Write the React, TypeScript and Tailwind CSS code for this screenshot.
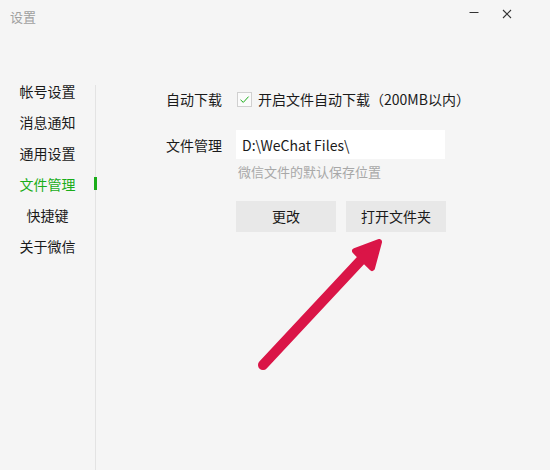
import { FC } from "react";

const menu = ["帐号设置", "消息通知", "通用设置", "文件管理", "快捷键", "关于微信"];

const App: FC = () => {
  return (
    <div className="relative w-[550px] h-[470px] overflow-hidden bg-[#f5f5f5] font-['Noto_Sans_CJK_SC','Microsoft_YaHei',sans-serif] text-[14px] text-[#1a1a1a]">
      {/* 标题栏 */}
      <div className="flex h-[75px] items-start justify-between pl-[10px] pr-[38px] pt-[8px]">
        <span className="text-[13px] leading-[18px] text-[#a0a0a0]">设置</span>
        <div className="flex items-center gap-[23px] pt-[1px]">
          <svg width="10" height="10" viewBox="0 0 10 10">
            <line x1="0.5" y1="3.5" x2="9.5" y2="3.5" stroke="#333" strokeWidth="1" />
          </svg>
          <svg width="10" height="10" viewBox="0 0 10 10">
            <path d="M1 1 L9 9 M9 1 L1 9" stroke="#333" strokeWidth="1.1" />
          </svg>
        </div>
      </div>

      <div className="flex h-[395px]">
        {/* 左侧菜单 */}
        <div className="w-[95px] shrink-0">
          {menu.map((item) => (
            <div
              key={item}
              className={`flex h-[31px] items-center justify-center leading-[20px] ${
                item === "文件管理" ? "text-[#1aad19]" : "text-[#1a1a1a]"
              }`}
            >
              {item}
            </div>
          ))}
        </div>

        {/* 分隔线 */}
        <div className="relative mt-[10px] w-px shrink-0 bg-[#e3e3e3]">
          <span className="absolute left-[-1px] top-[92px] h-[13px] w-[3px] bg-[#1aad19]" />
        </div>

        {/* 内容区 */}
        <div className="flex flex-col pl-[70px] pt-[14px]">
          <div className="flex h-[20px] items-center">
            <span className="w-[56px] leading-[20px]">自动下载</span>
            <span className="ml-[15px] flex h-[15px] w-[15px] items-center justify-center border border-[#d0d0d0] bg-[#fbfbfb]">
              <svg width="11" height="11" viewBox="0 0 11 11">
                <path d="M1.5 5.8 L4.3 8.4 L9.6 2.6" fill="none" stroke="#1aad19" strokeWidth="1" />
              </svg>
            </span>
            <span className="ml-[6px] leading-[20px]">开启文件自动下载（200MB以内）</span>
          </div>

          <div className="mt-[21px] flex items-center">
            <span className="w-[56px] leading-[20px]">文件管理</span>
            <div className="ml-[14px] flex h-[29px] w-[209px] items-center bg-white pl-[6px] leading-[20px]">
              D:\WeChat Files\
            </div>
          </div>

          <div className="ml-[72px] mt-[4px] text-[13px] leading-[18px] text-[#a8a8a8]">
            微信文件的默认保存位置
          </div>

          <div className="ml-[70px] mt-[20px] flex gap-[10px]">
            <button className="h-[31px] w-[100px] bg-[#e8e8e8] text-[14px] text-[#1a1a1a]">更改</button>
            <button className="h-[31px] w-[100px] bg-[#e8e8e8] text-[14px] text-[#1a1a1a]">打开文件夹</button>
          </div>
        </div>
      </div>

      {/* 红色箭头标注 */}
      <svg className="pointer-events-none absolute left-0 top-0" width="550" height="470" viewBox="0 0 550 470">
        <line x1="263" y1="365" x2="362" y2="259" stroke="#da1547" strokeWidth="10" strokeLinecap="round" />
        <polygon
          points="379,242 355,251 372,268"
          fill="#da1547"
          stroke="#da1547"
          strokeWidth="6"
          strokeLinejoin="round"
        />
      </svg>
    </div>
  );
};

export default App;
